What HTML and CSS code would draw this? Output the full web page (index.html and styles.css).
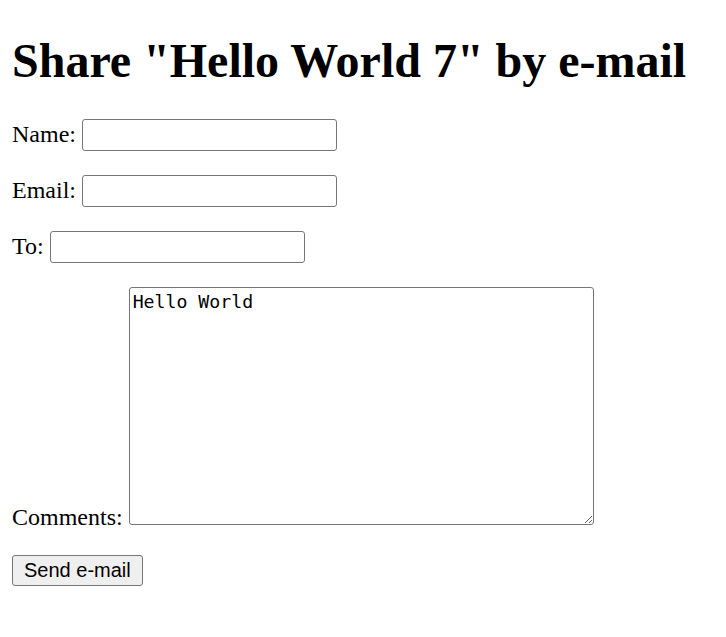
FILE: index.html
```html
<!DOCTYPE html>
<html>
<head>
<meta charset="utf-8">
<title>Share</title>
<link rel="stylesheet" href="styles.css">
</head>
<body>
<h1 class="title">Share "Hello World 7" by e-mail</h1>
<form class="share-form">
<p class="row">Name: <input class="field" type="text"></p>
<p class="row">Email: <input class="field" type="text"></p>
<p class="row">To: <input class="field" type="text"></p>
<p class="row">Comments: <textarea class="comments">Hello World</textarea></p>
<p class="row"><button class="send" type="button">Send e-mail</button></p>
</form>
</body>
</html>
```
FILE: styles.css
```css
body {
  margin: 0 12px 12px;
  padding-top: 33px;
  font-family: "Liberation Serif", "Times New Roman", serif;
  font-size: 24px;
  color: #000;
  background: #fff;
}
.title {
  font-size: 48px;
  font-weight: bold;
  margin: 0 0 31px;
}
.share-form {
  margin: 0;
}
.row {
  margin: 24px 0;
}
.field {
  box-sizing: border-box;
  width: 255px;
  height: 32px;
  margin: 0;
  padding: 1px 3px;
  border: 1px solid #767676;
  border-radius: 3px;
  font-family: "Liberation Sans", Arial, sans-serif;
  font-size: 20px;
  background: #fff;
}
.comments {
  box-sizing: border-box;
  width: 465px;
  height: 238px;
  margin: 0;
  padding: 3px 3px;
  border: 1px solid #767676;
  border-radius: 3px;
  font-family: "DejaVu Sans Mono", monospace;
  font-size: 18.2px;
  line-height: 1.2;
  color: #000;
  resize: both;
}
.send {
  box-sizing: border-box;
  height: 31px;
  margin: 0;
  padding: 1px 11px;
  border: 1px solid #767676;
  border-radius: 3px;
  background: #efefef;
  font-family: "Liberation Sans", Arial, sans-serif;
  font-size: 20px;
  color: #000;
}
```
